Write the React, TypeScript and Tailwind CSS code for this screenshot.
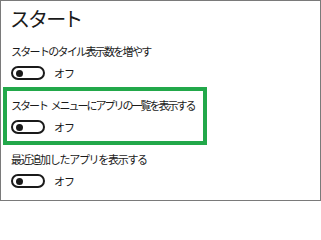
function Toggle() {
  return (
    <div className="flex items-center gap-[9px]">
      <div className="flex h-[14px] w-[34px] items-center rounded-full border-2 border-[#1a1a1a] pl-[3px]">
        <div className="h-[7px] w-[7px] rounded-full bg-[#1a1a1a]" />
      </div>
      <span className="text-[11px] leading-none tracking-[-1px]">オフ</span>
    </div>
  )
}

function Setting({ label, tracking }: { label: string; tracking: string }) {
  return (
    <div className="flex flex-col gap-[8px]">
      <p className={`text-[11px] leading-[14px] whitespace-pre ${tracking}`}>{label}</p>
      <Toggle />
    </div>
  )
}

export default function App() {
  return (
    <div className="h-[201px] w-[321px] overflow-hidden border border-[#7a7a7a] bg-white font-['Noto_Sans_CJK_JP','Noto_Sans',sans-serif] text-[#1a1a1a]">
      <div className="flex flex-col px-[2px] pt-[5px]">
        <h1 className="pl-[8px] text-[20px] leading-[26px] [font-feature-settings:'palt']">スタート</h1>
        <div className="mt-[12px] pl-[8px]">
          <Setting label="スタートのタイル表示数を増やす" tracking="tracking-[-1.7px]" />
        </div>
        <div className="mt-[7px] w-[204px] border-4 border-[#22a84a] pb-[7px] pl-[4px] pt-[7px]">
          <Setting label={"スタート\u2002メニューにアプリの一覧を表示する"} tracking="tracking-[-2px]" />
        </div>
        <div className="mt-[7px] pl-[8px]">
          <Setting label="最近追加したアプリを表示する" tracking="tracking-[-1.3px]" />
        </div>
      </div>
    </div>
  )
}
